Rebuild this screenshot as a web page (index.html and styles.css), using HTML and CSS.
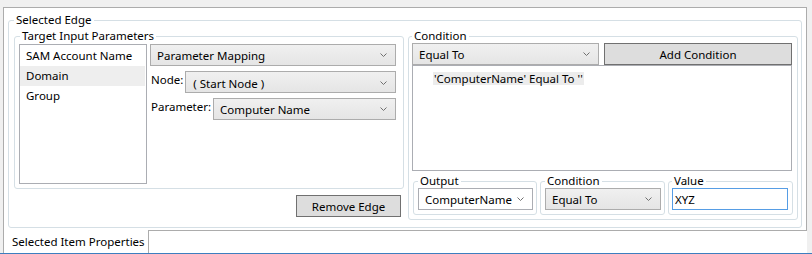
FILE: index.html
```html
<!DOCTYPE html>
<html lang="en">
<head>
    <meta charset="UTF-8">
    <title>Selected Edge</title>
    <link rel="stylesheet" href="styles.css">
</head>
<body>
    <div class="window">
        <div class="panel">
            <fieldset class="group edge">
                <legend>Selected Edge</legend>
                <div class="edge-body">

                    <!-- Left column: target parameters + remove button -->
                    <div class="left-col">
                        <fieldset class="group target">
                            <legend>Target Input Parameters</legend>
                            <ul class="listbox params">
                                <li>SAM Account Name</li>
                                <li class="selected">Domain</li>
                                <li>Group</li>
                            </ul>
                            <div class="mapping">
                                <div class="combo">
                                    <span>Parameter Mapping</span>
                                    <svg class="chevron" width="7" height="4" viewBox="0 0 7 4"><path d="M0.5 0.5 L3.5 3.5 L6.5 0.5" fill="none" stroke="#707070" stroke-width="1"/></svg>
                                </div>
                                <div class="field-row">
                                    <label>Node:</label>
                                    <div class="combo start-node">
                                        <span>( Start Node )</span>
                                        <svg class="chevron" width="7" height="4" viewBox="0 0 7 4"><path d="M0.5 0.5 L3.5 3.5 L6.5 0.5" fill="none" stroke="#707070" stroke-width="1"/></svg>
                                    </div>
                                </div>
                                <div class="field-row">
                                    <label>Parameter:</label>
                                    <div class="combo">
                                        <span>Computer Name</span>
                                        <svg class="chevron" width="7" height="4" viewBox="0 0 7 4"><path d="M0.5 0.5 L3.5 3.5 L6.5 0.5" fill="none" stroke="#707070" stroke-width="1"/></svg>
                                    </div>
                                </div>
                            </div>
                        </fieldset>
                        <button class="btn remove">Remove Edge</button>
                    </div>

                    <!-- Right column: condition editor -->
                    <fieldset class="group condition">
                        <legend>Condition</legend>
                        <div class="cond-top">
                            <div class="combo">
                                <span>Equal To</span>
                                <svg class="chevron" width="7" height="4" viewBox="0 0 7 4"><path d="M0.5 0.5 L3.5 3.5 L6.5 0.5" fill="none" stroke="#707070" stroke-width="1"/></svg>
                            </div>
                            <button class="btn">Add Condition</button>
                        </div>
                        <div class="listbox conditions">
                            <span class="cond-item">'ComputerName' Equal To ''</span>
                        </div>
                        <div class="cond-fields">
                            <fieldset class="group small">
                                <legend>Output</legend>
                                <div class="combo editable">
                                    <span>ComputerName</span>
                                    <svg class="chevron" width="7" height="4" viewBox="0 0 7 4"><path d="M0.5 0.5 L3.5 3.5 L6.5 0.5" fill="none" stroke="#707070" stroke-width="1"/></svg>
                                </div>
                            </fieldset>
                            <fieldset class="group small">
                                <legend>Condition</legend>
                                <div class="combo">
                                    <span>Equal To</span>
                                    <svg class="chevron" width="7" height="4" viewBox="0 0 7 4"><path d="M0.5 0.5 L3.5 3.5 L6.5 0.5" fill="none" stroke="#707070" stroke-width="1"/></svg>
                                </div>
                            </fieldset>
                            <fieldset class="group small value">
                                <legend>Value</legend>
                                <input class="textbox" type="text" value="XYZ">
                            </fieldset>
                        </div>
                    </fieldset>

                </div>
            </fieldset>
        </div>

        <div class="tabstrip">
            <div class="tab">Selected Item Properties</div>
            <div class="tab-fill"></div>
        </div>
    </div>
</body>
</html>
```

FILE: styles.css
```css
/* Windows-style property panel */
body {
    margin: 0;
    background: #f0f0f0;
    font-family: "Noto Sans", "Open Sans", sans-serif;
    font-size: 11.5px;
    color: #000;
}

.window {
    width: 812px;
    height: 254px;
    box-sizing: border-box;
    padding: 7px 5px 0 3px;
    border-bottom: 1px solid #3d7ebf;
    display: flex;
    flex-direction: column;
}

.panel {
    height: 223px;
    box-sizing: border-box;
    border: 1px solid #acacac;
    border-bottom: none;
    background: #fff;
    padding: 5px 4px 2px 4px;
    display: flex;
    flex-direction: column;
}

/* Group boxes */
.group {
    margin: 0;
    min-width: 0;
    border: 1px solid #d5dfe5;
    border-radius: 3px;
}

.group > legend {
    padding: 0 2px;
    line-height: 14px;
}

.edge {
    flex: 1;
    padding: 2px 3px 0 5px;
}

.edge-body {
    display: flex;
    gap: 4px;
}

.left-col {
    width: 390px;
    display: flex;
    flex-direction: column;
}

.target {
    height: 160px;
    box-sizing: border-box;
    padding: 1px 7px 4px 4px;
    display: flex;
    gap: 3px;
}

.target > legend {
    margin-left: 1px;
}

/* List boxes */
.listbox {
    margin: 0;
    padding: 0;
    list-style: none;
    border: 1px solid #abadb3;
    background: #fff;
    box-sizing: border-box;
}

.params {
    width: 128px;
    height: 140px;
    padding-top: 1px;
}

.params li {
    height: 20px;
    line-height: 19px;
    padding-left: 6px;
    margin-right: 1px;
}

.params li.selected {
    background: #eeeeee;
}

.mapping {
    flex: 1;
    display: flex;
    flex-direction: column;
    gap: 5px;
}

.field-row {
    display: flex;
    gap: 2px;
}

.field-row label {
    padding-top: 1px;
    padding-left: 1px;
    line-height: 16px;
}

.field-row .combo {
    flex: 1;
}

/* Combo boxes */
.combo {
    height: 22px;
    box-sizing: border-box;
    border: 1px solid #acacac;
    background: linear-gradient(#f0f0f0, #e5e5e5);
    padding: 0 8px 0 6px;
    display: flex;
    align-items: center;
    justify-content: space-between;
}

.combo.start-node {
    padding-left: 7px;
    padding-top: 2px;
}

.combo.editable {
    background: #fff;
    border-color: #abadb3;
}

.chevron {
    flex: none;
}

/* Buttons */
.btn {
    height: 22px;
    box-sizing: border-box;
    border: 1px solid #707070;
    background: #dddddd;
    font-family: inherit;
    font-size: inherit;
    color: #000;
    padding: 0;
}

.remove {
    width: 105px;
    align-self: flex-end;
    margin-top: 6px;
    margin-right: 3px;
}

/* Condition editor */
.condition {
    flex: 1;
    padding: 0 5px 4px 3px;
}

.cond-top {
    display: grid;
    grid-template-columns: 187px 1fr;
    gap: 5px;
}

.conditions {
    height: 106px;
    padding: 5px 0 0 20px;
}

.cond-item {
    background: #ececec;
    padding: 0 1px;
    line-height: 13px;
    display: inline-block;
}

.cond-fields {
    display: grid;
    grid-template-columns: 124px 125px 125px;
    gap: 3px;
    margin-top: 3px;
    padding-left: 1px;
}

.small {
    padding: 0 3px 4px 4px;
}

.small.value {
    padding: 0 4px 4px 3px;
}

.textbox {
    display: block;
    width: 100%;
    height: 22px;
    box-sizing: border-box;
    border: 1px solid #569de5;
    outline: none;
    padding: 0 2px;
    font-family: inherit;
    font-size: inherit;
    color: #000;
}

/* Bottom tab strip */
.tabstrip {
    flex: 1;
    display: flex;
    background: #fff;
}

.tab {
    width: 146px;
    box-sizing: border-box;
    border-left: 1px solid #acacac;
    border-right: 1px solid #acacac;
    background: #fff;
    padding: 4px 0 0 8px;
    line-height: 16px;
}

.tab-fill {
    flex: 1;
    border-top: 1px solid #acacac;
}
```
